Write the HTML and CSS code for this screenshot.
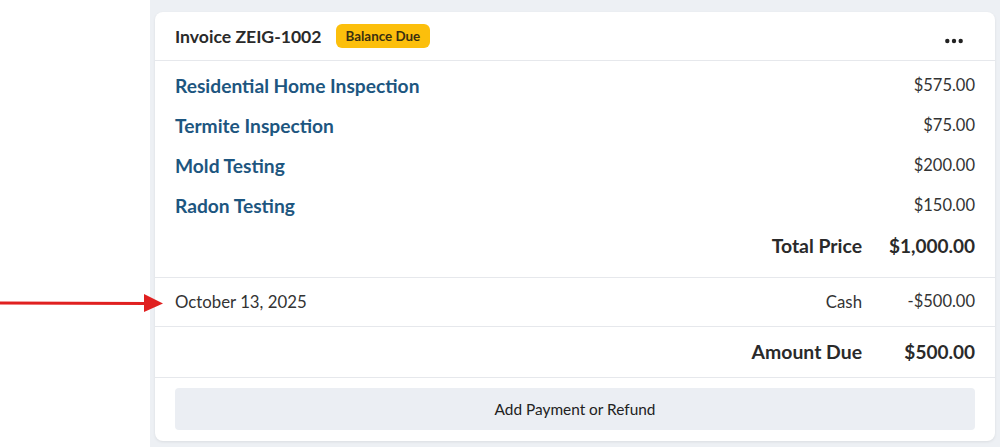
FILE: index.html
```html
<!DOCTYPE html>
<html>
<head>
<meta charset="utf-8">
<link rel="stylesheet" href="styles.css">
</head>
<body>
<div class="page">
  <div class="gutter">
    <svg class="arrow" width="164" height="24" viewBox="0 0 164 24">
      <line x1="0" y1="12" x2="148" y2="12.5" stroke="#e02020" stroke-width="3"/>
      <polygon points="144,3 163,12.5 144,21" fill="#e02020"/>
    </svg>
  </div>
  <div class="panel">
    <div class="card">
      <div class="card-header">
        <div class="title-group">
          <span class="title">Invoice ZEIG-1002</span>
          <span class="badge">Balance Due</span>
        </div>
        <svg class="more" width="18" height="6" viewBox="0 0 18 6">
          <circle cx="2.3" cy="3" r="2.2" fill="#222"/>
          <circle cx="9" cy="3" r="2.2" fill="#222"/>
          <circle cx="15.7" cy="3" r="2.2" fill="#222"/>
        </svg>
      </div>
      <div class="items">
        <div class="item"><span class="item-name">Residential Home Inspection</span><span class="amt">$575.00</span></div>
        <div class="item"><span class="item-name">Termite Inspection</span><span class="amt">$75.00</span></div>
        <div class="item"><span class="item-name">Mold Testing</span><span class="amt">$200.00</span></div>
        <div class="item"><span class="item-name">Radon Testing</span><span class="amt">$150.00</span></div>
        <div class="total-row"><span class="label">Total Price</span><span class="amt">$1,000.00</span></div>
      </div>
      <div class="payment">
        <span class="date">October 13, 2025</span>
        <span class="method">Cash</span>
        <span class="amt">-$500.00</span>
      </div>
      <div class="due">
        <span class="label">Amount Due</span><span class="amt">$500.00</span>
      </div>
      <div class="actions">
        <button class="add-btn">Add Payment or Refund</button>
      </div>
    </div>
  </div>
</div>
</body>
</html>
```

FILE: styles.css
```css
* { box-sizing: border-box; }
html, body { margin: 0; padding: 0; }
body {
  font-family: "Lato", "Liberation Sans", sans-serif;
  color: #2a2a2a;
  background: #fff;
  width: 1000px;
  height: 447px;
  overflow: hidden;
}
.page {
  display: flex;
  height: 447px;
  position: relative;
}
.gutter {
  width: 150px;
  flex: none;
  background: #fff;
  position: relative;
}
.arrow {
  position: absolute;
  left: 0;
  top: 291px;
  z-index: 5;
  overflow: visible;
}
.panel {
  flex: 1;
  background: #edf0f4;
  padding: 12px 5px 0 5px;
}
.card {
  background: #fff;
  border-radius: 8px;
  box-shadow: 0 1px 3px rgba(0,0,0,0.08);
}
.card-header {
  height: 49px;
  display: flex;
  align-items: center;
  justify-content: space-between;
  padding: 0 20px;
  border-bottom: 1px solid #e6e8ec;
}
.title-group { display: flex; align-items: center; gap: 14px; }
.title { font-weight: 700; font-size: 17.6px; color: #2a2a2a; }
.badge {
  background: #fcbf0c;
  color: #3a2f10;
  font-weight: 700;
  font-size: 13.4px;
  padding: 4px 10px;
  border-radius: 6px;
  line-height: 16px;
}
.more { margin-right: 12px; margin-top: 10px; display: block; }
.items { padding: 4px 20px 0; border-bottom: 1px solid #e6e8ec; }
.item, .total-row {
  height: 40px;
  display: flex;
  align-items: center;
  justify-content: space-between;
}
.total-row { justify-content: flex-end; height: 40px; margin-bottom: 12px; }
.item-name { color: #1d5680; font-weight: 700; font-size: 19.2px; }
.amt { font-size: 16.5px; color: #333; width: 100px; text-align: right; }
.total-row .label, .due .label { font-weight: 700; font-size: 19.4px; }
.total-row .amt, .due .amt { font-weight: 700; font-size: 19px; color: #2a2a2a; }
.label { margin-right: 13px; }
.payment {
  height: 49px;
  display: flex;
  align-items: center;
  padding: 0 20px 2px;
  border-bottom: 1px solid #e6e8ec;
  font-size: 16.8px;
  color: #333;
}
.payment .amt { font-size: 16.5px; }
.date { flex: 1; }
.method { margin-right: 13px; }
.due {
  height: 51px;
  display: flex;
  align-items: center;
  justify-content: flex-end;
  padding: 0 20px 1px;
  border-bottom: 1px solid #e6e8ec;
}
.actions { padding: 10px 20px 11px; }
.add-btn {
  width: 100%;
  height: 42px;
  border: none;
  border-radius: 4px;
  background: #ebeef3;
  font-family: inherit;
  font-size: 15.4px;
  color: #222;
}
```
